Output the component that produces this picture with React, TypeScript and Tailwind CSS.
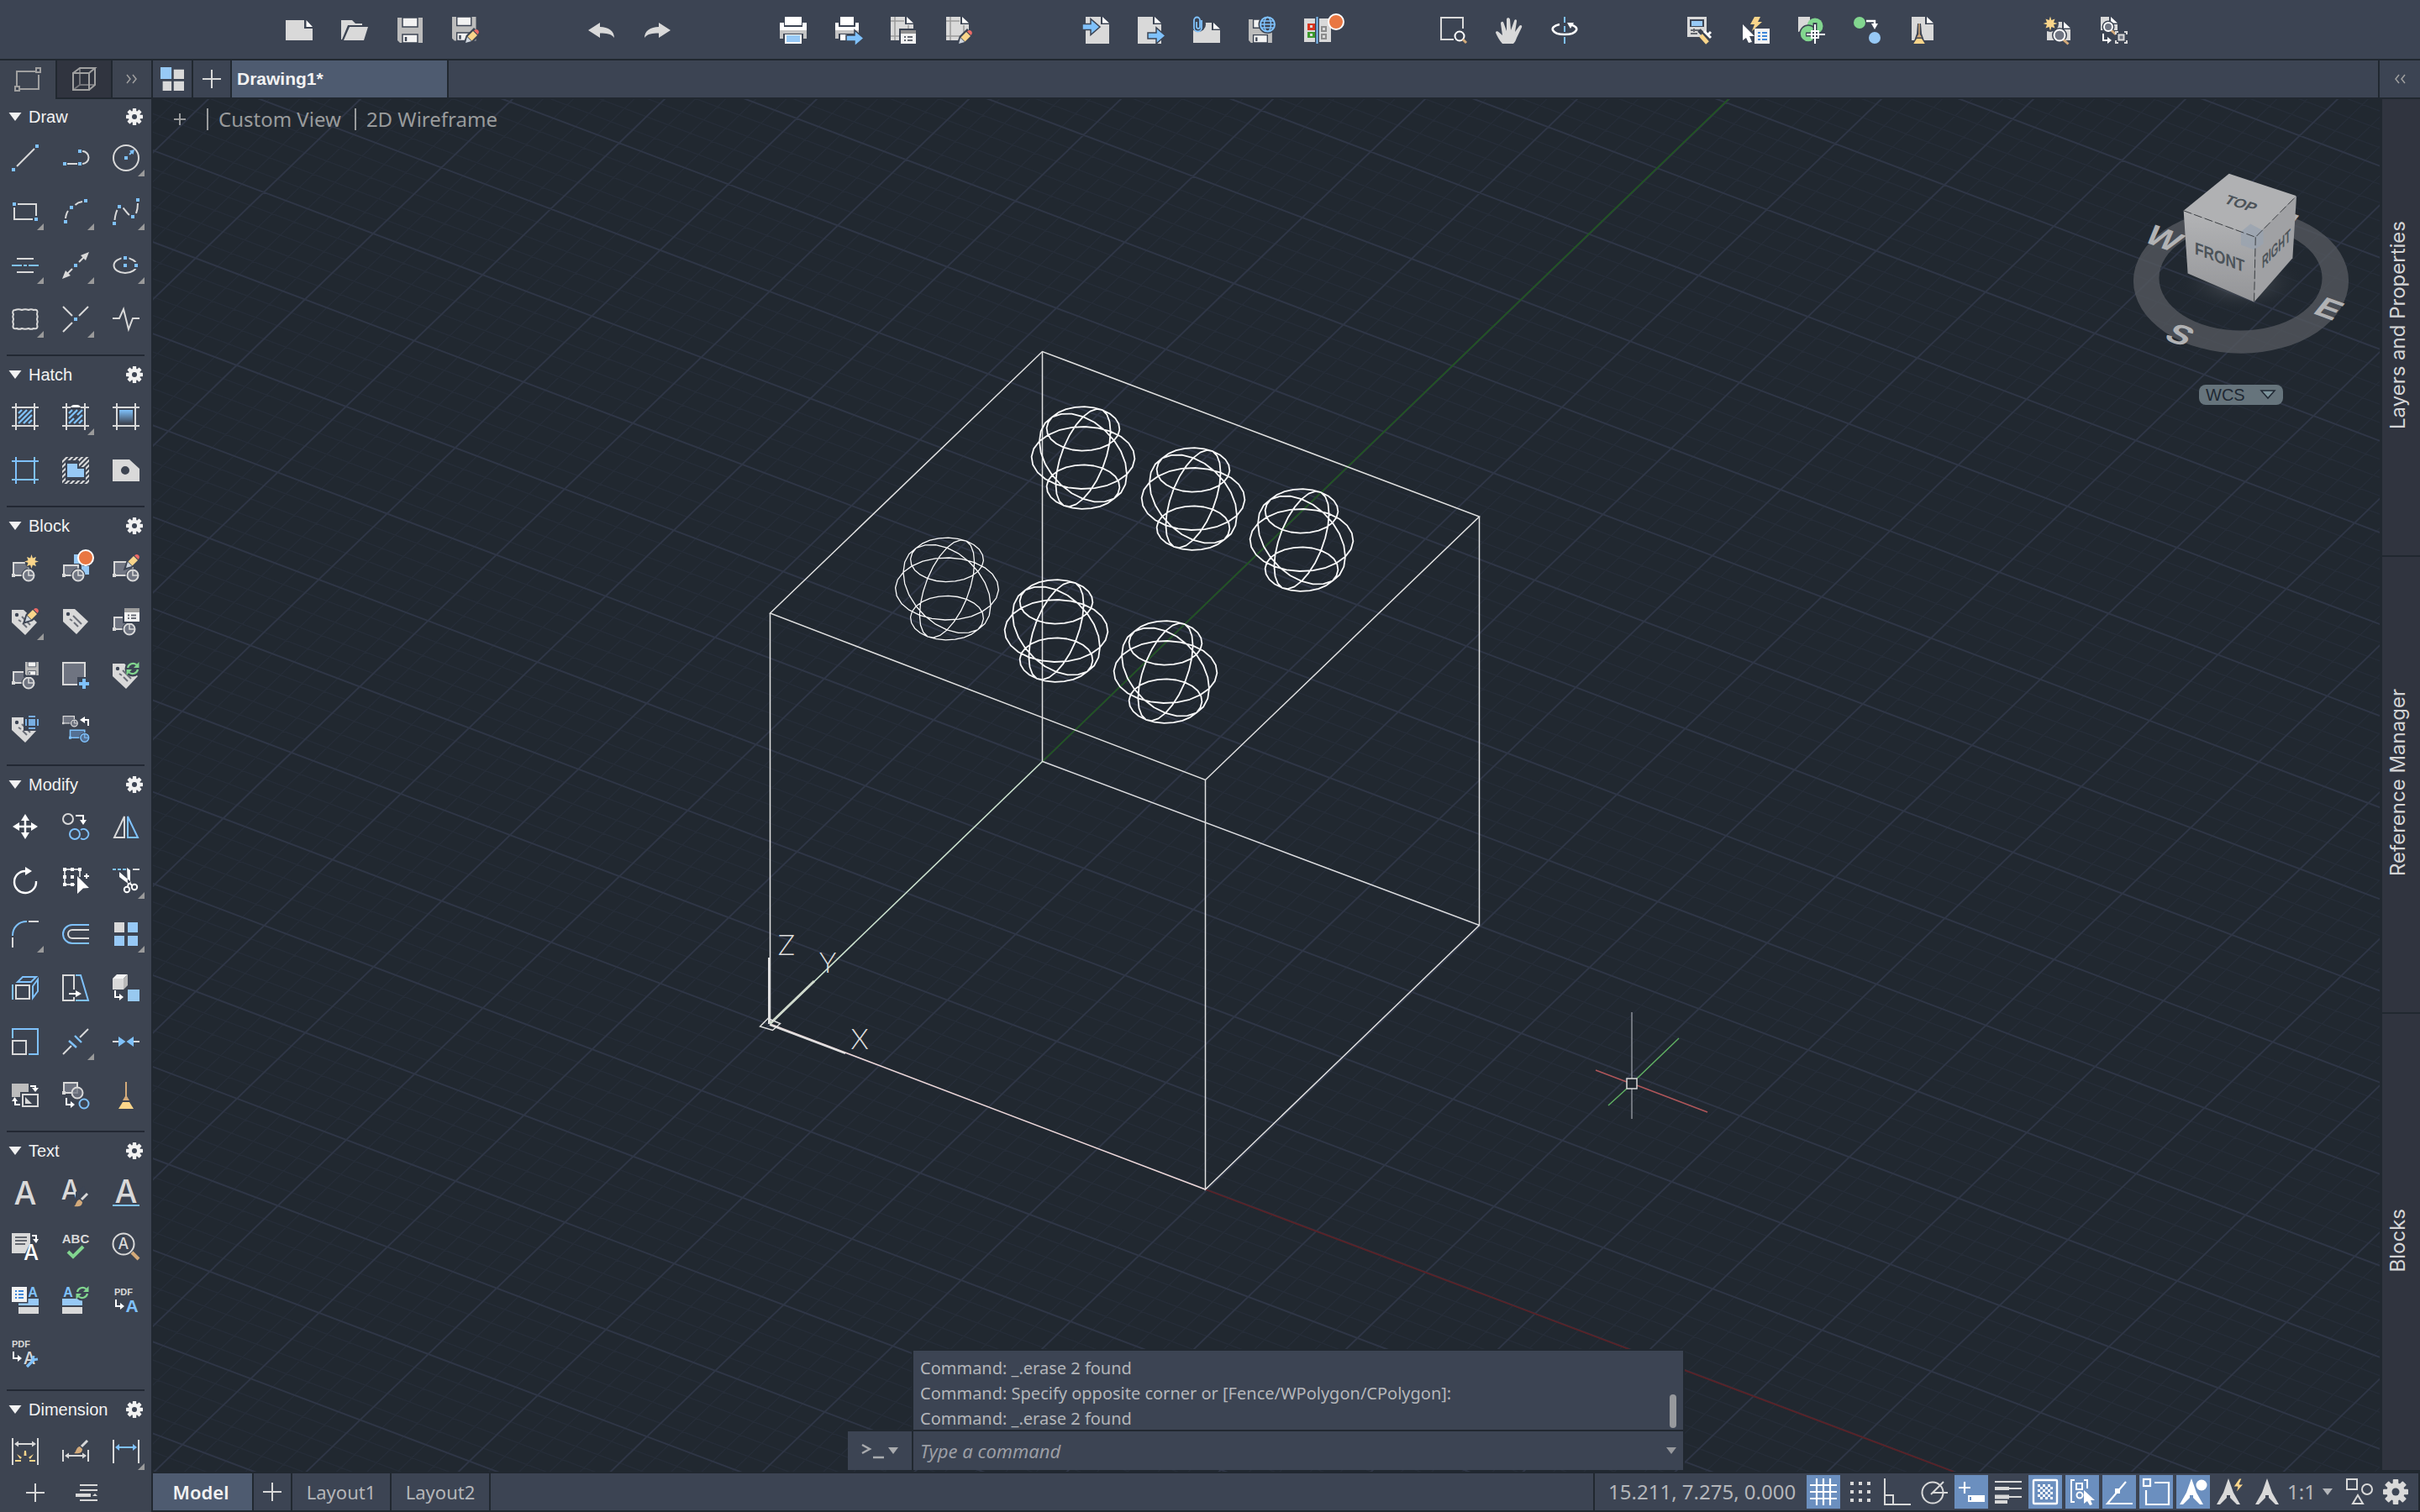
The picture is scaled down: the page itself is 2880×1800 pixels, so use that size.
import React from "react";

const G = "#d9d9d9";
const B = "#7fc1fb";
const LB = "#97c9f6";
const W = "#ffffff";
const Y = "#fad58a";
const BR = "#d3aa7a";
const GR = "#82d68f";
const D = "#3c4453";
const FILL = "#6f7481";

type Kids = { children?: React.ReactNode };

function Svg({ children, className = "size-8" }: Kids & { className?: string }) {
  return (
    <svg viewBox="0 0 32 32" className={`${className} shrink-0 overflow-visible`} fill="none" aria-hidden="true">
      {children}
    </svg>
  );
}

const S = ({ d, c = G, w = 2 }: { d: string; c?: string; w?: number }) => <path d={d} stroke={c} strokeWidth={w} />;
const F = ({ d, c = G }: { d: string; c?: string }) => <path d={d} fill={c} fillRule="evenodd" />;
const Sq = ({ x, y, c = B, s = 4 }: { x: number; y: number; c?: string; s?: number }) => (
  <rect x={x - s / 2} y={y - s / 2} width={s} height={s} fill={c} />
);

/* Shared pieces that several tool icons are made of */
const Frame = ({ c = G }: { c?: string }) => <S c={c} d="M5 0V32M27 0V32M0 5H32M0 27H32" />;

const Pencil = ({ x = 16, y = 0 }: { x?: number; y?: number }) => (
  <g transform={`translate(${x} ${y})`}>
    <path d="M-1 17L2 8L10 0L16 6L8 14Z" fill={D} stroke={D} strokeWidth="3" />
    <path d="M0 16L2 9L7 14Z" fill="#cfd6de" />
    <path d="M2.500 8.500L9 2L14 7L7.500 13.500Z" fill={Y} />
    <path d="M10 1.500Q12.500 -1 15 1Q17 3.500 14.500 6Z" fill="#ec6a66" />
  </g>
);

const BlockShape = ({ x = 0, y = 0, w = 18, h = 15, c = G, f = FILL }: { x?: number; y?: number; w?: number; h?: number; c?: string; f?: string }) => (
  <g transform={`translate(${x} ${y})`}>
    <rect x="2" y={25 - h} width={w} height={h} fill={f} stroke={c} strokeWidth="2" />
    <Sq x={2} y={25} c={c} />
    <circle cx={w + 2} cy="25" r="8.500" fill={D} />
    <circle cx={w + 2} cy="25" r="6.500" fill={f} stroke={c} strokeWidth="2" />
    <path d={`M${w + 2} 19V25H${w + 8}`} stroke={c} strokeWidth="1.500" />
  </g>
);

const Tag = ({ x = 0, y = 0 }: { x?: number; y?: number }) => (
  <g transform={`translate(${x} ${y})`}>
    <path d="M0 0H14L30 15L16 30L0 15Z" fill={G} />
    <circle cx="6" cy="6" r="2.200" fill={D} />
    <path d="M12 8L22 18M8 12L11 14M13 16L18 21" stroke="#6b6f78" strokeWidth="2" />
  </g>
);

const Refresh = ({ x = 16, y = 0 }: { x?: number; y?: number }) => (
  <g transform={`translate(${x} ${y})`}>
    <circle cx="8" cy="8" r="9.500" fill={D} />
    <path d="M2 7A6.500 6.500 0 0 1 12.500 3.500M14 9A6.500 6.500 0 0 1 3.500 12.500" stroke={GR} strokeWidth="2.200" />
    <path d="M15.500 0V7H9ZM0.500 16V9H7Z" fill={GR} />
  </g>
);

const Floppy = ({ k = 1 }: { k?: number }) => (
  <g transform={`scale(${k})`}>
    <path d="M0 0H30V30H3L0 27Z" fill="#bcbcbc" />
    <path d="M6 0H24V11H6Z" fill="#f2f2f2" stroke={D} strokeWidth="1.500" />
    <path d="M6 20H24V30H6Z" fill="#f2f2f2" stroke={D} strokeWidth="1.500" />
    <path d="M10 23V28" stroke={D} strokeWidth="2.500" />
  </g>
);

const Doc = ({ x = 0, y = 0, w = 28, h = 32 }: { x?: number; y?: number; w?: number; h?: number }) => (
  <g transform={`translate(${x} ${y})`}>
    <path d={`M0 0H${w - 10}V9H${w}V${h}H0Z`} fill={G} />
    <path d={`M${w - 8} 0L${w} 7.500H${w - 8}Z`} fill={W} />
  </g>
);

const Badge = ({ x, y }: { x: number; y: number }) => <circle cx={x} cy={y} r="9" fill="#e97742" stroke={W} strokeWidth="2" />;

const RightArrow = ({ x, y, c = B }: { x: number; y: number; c?: string }) => (
  <path transform={`translate(${x} ${y})`} d="M0 -3H10V-9L21 0.500L10 10V4H0Z" fill={c} stroke={D} strokeWidth="1.500" />
);

const Star = ({ x, y }: { x: number; y: number }) => (
  <g transform={`translate(${x} ${y})`} fill={Y}>
    <path d="M0 -8.500L2 -2L8.500 0L2 2L0 8.500L-2 2L-8.500 0L-2 -2Z" />
    <path d="M-5.500 -5.500L0 -3.500L5.500 -5.500L3.500 0L5.500 5.500L0 3.500L-5.500 5.500L-3.500 0Z" />
  </g>
);

const Magnifier = ({ x, y, r = 6 }: { x: number; y: number; r?: number }) => (
  <g transform={`translate(${x} ${y})`}>
    <circle r={r + 2.500} fill={D} />
    <path d={`M${r * 0.7} ${r * 0.8}L${r + 4} ${r + 4}`} stroke={BR} strokeWidth="3" />
    <circle r={r} fill={FILL} stroke={W} strokeWidth="2" />
  </g>
);

const Brush = ({ x, y }: { x: number; y: number }) => (
  <g transform={`translate(${x} ${y})`}>
    <path d="M9 7L16 0" stroke={G} strokeWidth="3" />
    <path d="M0 15C3 14 2 8 7 7L10 10C10 15 5 16 0 15Z" fill={BR} />
  </g>
);

const SmallTurn = ({ x, y }: { x: number; y: number }) => (
  <g transform={`translate(${x} ${y})`}>
    <path d="M1 0V8H7" stroke={W} strokeWidth="2" />
    <path d="M6 4L11 8L6 12Z" fill={W} />
  </g>
);

const Broom = () => (
  <>
    <path d="M15 0H17V17L20 22H12L15 17Z" fill={BR} />
    <path d="M12 24H20L25 32H7Z" fill={Y} />
  </>
);

const T = ({ x, y, s, c = G, b, children }: Kids & { x: number; y: number; s: number; c?: string; b?: boolean }) => (
  <text x={x} y={y} fontSize={s} fill={c} textAnchor="middle" className={b ? "font-['Liberation_Sans'] font-bold" : "font-['Inter'] font-medium"}>
    {children}
  </text>
);

const Gear = ({ className, c = "#f2f2f2" }: { className: string; c?: string }) => (
  <Svg className={className}>
    {[0, 45, 90, 135].map((a) => (
      <rect key={a} x="12.500" y="0" width="7" height="32" rx="1" fill={c} transform={`rotate(${a} 16 16)`} />
    ))}
    <circle cx="16" cy="16" r="11.500" fill={c} />
    <circle cx="16" cy="16" r="4.800" fill={D} />
  </Svg>
);

const Dn = ({ className }: { className: string }) => (
  <svg viewBox="0 0 12 8" className={`${className} shrink-0`} aria-hidden="true">
    <path d="M0 0H12L6 8Z" fill="currentColor" />
  </svg>
);

type Tool = { name: string; icon: React.ReactNode; more?: boolean };

const draw: Tool[] = [
  { name: "Line", icon: <><S d="M6 26L27 5" /><Sq x={2} y={30} /><Sq x={30} y={2} /></> },
  { name: "Polyline", icon: <><S d="M6 23H18M24 8A7.500 7.500 0 0 1 24 23" /><Sq x={3} y={23} /><Sq x={21} y={23} /><Sq x={21} y={8} /></> },
  { name: "Circle", more: true, icon: <><circle cx="16" cy="16" r="15" stroke={G} strokeWidth="2" /><Sq x={16} y={16} /><S c={B} d="M20 12L23 9" /><F c={B} d="M26 6L24.500 12L20 7.500Z" /></> },
  { name: "Rectangle", more: true, icon: <><S d="M7 7H29V21M25 25H3V11" /><Sq x={3} y={7} /><Sq x={29} y={25} /></> },
  { name: "Arc", more: true, icon: <><S d="M4 24C4.500 20 5.500 17 7 15M15.500 8C18 5.500 21 4.500 24 4" /><Sq x={4} y={28} /><Sq x={11} y={11} /><Sq x={28} y={3} /></> },
  { name: "Spline", more: true, icon: <><S d="M2.500 26C3 21 4 17 5.500 14M12.500 11.500C15 14 17 18 20 20M28 18C29.500 14 30 10 30 6" /><Sq x={2} y={30} /><Sq x={8} y={10} /><Sq x={24} y={22} /><Sq x={30} y={2} /></> },
  { name: "Centerline", more: true, icon: <><S d="M6 8H26M6 24H26" /><S c={B} d="M0 16H12M14 16H18M20 16H32" /></> },
  { name: "Ray", more: true, icon: <><S d="M20 12L27 5M12 20L5 27" /><F d="M32 0L22 4L28 10ZM0 32L10 28L4 22Z" /><Sq x={16} y={16} /></> },
  { name: "Ellipse", more: true, icon: <><ellipse cx="15" cy="16" rx="13.500" ry="9" stroke={G} strokeWidth="2" /><Sq x={15} y={7} c={D} s={9} /><Sq x={28} y={16} c={D} s={8} /><Sq x={15} y={7} /><Sq x={15} y={16} /><Sq x={28} y={16} /></> },
  { name: "Revision cloud", more: true, icon: <S d="M4 5C1 5 0.500 8 2 10Q0.500 13 2 16Q0.500 19 2 22C0.500 26 2 28 6 27Q9 28.500 12 27Q16 28.500 20 27Q23 28.500 26 27C30 28 31.500 26 30 22Q31.500 19 30 16Q31.500 13 30 10C31.500 6 30 4 26 5Q23 3.500 20 5Q16 3.500 12 5Q8 3.500 4 5Z" /> },
  { name: "Point", more: true, icon: <><S d="M1 1L12 12M31 1L20 12M1 31L12 20" /><Sq x={16} y={16} /></> },
  { name: "Breakline", icon: <S d="M0 15H8L13 4L19 28L24 15H32" /> },
];

const hatch: Tool[] = [
  { name: "Hatch", icon: <><Frame /><path d="M8 12L12 8M8 18L18 8M8 24L24 8M14 24L24 14M20 24L24 20" stroke={B} strokeWidth="2.400" /></> },
  { name: "Hatch edit", more: true, icon: <><S d="M5 0V32M27 0V32M0 5H10M22 5H32M0 27H32" /><F c={W} d="M10 5Q11 2 14 2H18Q21 2 22 5Z" /><path d="M8 12L12 8M8 18L18 8M8 24L14 18M18 14L24 8M14 24L24 14M20 24L24 20" stroke={B} strokeWidth="2.400" /></> },
  { name: "Gradient", icon: <><defs><linearGradient id="gradTool" x1="0" y1="0" x2="0" y2="1"><stop offset="0" stopColor="#7fc1fb" /><stop offset="1" stopColor="#3f4756" /></linearGradient></defs><Frame /><rect x="8" y="8" width="16" height="16" fill="url(#gradTool)" /></> },
  { name: "Boundary", icon: <Frame c={B} /> },
  { name: "Wipeout", icon: <><defs><clipPath id="wipeClip"><path d="M0 0H32V32H0Z" /></clipPath></defs><g clipPath="url(#wipeClip)"><path d="M-2 8L8 -2M-2 14L14 -2M-2 20L20 -2M-2 26L26 -2M-2 32L32 -2M0 36L36 0M6 36L36 6M12 36L36 12M18 36L36 18M24 36L36 24" stroke={G} strokeWidth="2.200" /></g><F c={D} d="M4 4H20V12H28V28H4Z" /><F c={LB} d="M6 8H18V14H26V24H6Z" /></> },
  { name: "Region", icon: <F d="M0 3H20L32 14V29H0ZM20 16A5 5 0 1 0 10 16A5 5 0 1 0 20 16Z" /> },
];

const block: Tool[] = [
  { name: "Create block", icon: <><BlockShape /><circle cx="23.500" cy="8.500" r="8" fill={D} /><Star x={23.500} y={8.500} /></> },
  { name: "Insert block", icon: <><F c={LB} d="M14 0H24V14H32V24H14Z" /><path d="M0 11H23V27H0Z" fill={D} /><BlockShape w={17} h={12} /><Badge x={28} y={4} /></> },
  { name: "Edit block", icon: <><BlockShape w={22} h={16} /><Pencil /></> },
  { name: "Edit attributes", more: true, icon: <><Tag y={2} /><Pencil /></> },
  { name: "Define attribute", icon: <Tag x={1} y={1} /> },
  { name: "Block attribute manager", icon: <><BlockShape w={18} h={14} /><path d="M12 -1H33V18H12Z" fill={D} /><F c="#f2f2f2" d="M14 0H32V16H14Z" /><F c="#9d9d9d" d="M14 0H32V5H14Z" /><S c="#6b6f78" d="M18 8.500H20M22 8.500H28M18 12H20M22 12H28" /></> },
  { name: "Save block", icon: <><BlockShape w={18} h={13} /><g transform="translate(16 0)"><path d="M-2 -1H17V18H-2Z" fill={D} /><Floppy k={0.53} /></g></> },
  { name: "Base point", icon: <><rect x="1" y="1" width="26" height="26" fill={FILL} stroke={G} strokeWidth="2" /><path d="M18 18H34V34H18Z" fill={D} /><S c={B} w={4} d="M26 20V32M20 26H32" /></> },
  { name: "Synchronize attributes", icon: <><Tag y={2} /><Refresh /></> },
  { name: "Attribute display", icon: <><Tag y={2} /><path d="M14 -1H33V18H14Z" fill={D} /><F c="#78aee2" d="M20 4H28V12H20ZM20 0H28V2H20ZM20 14H28V16H20ZM16 4H18V12H16ZM30 4H32V12H30Z" /></> },
  { name: "Replace block", icon: <><g transform="scale(.6) translate(0 -10)"><BlockShape w={22} h={14} /></g><S c={W} d="M31 12V5H25" /><F c={W} d="M27 1L21 5L27 9Z" /><g transform="translate(8 12) scale(.75)"><BlockShape x={0} y={-6} w={23} h={12} c={B} f="#557093" /></g></> },
];

const modify: Tool[] = [
  { name: "Move", icon: <><S c={W} w={2.5} d="M16 6V26M6 16H26" /><F c={W} d="M16 1L21 9H11ZM16 31L21 23H11ZM1 16L9 11V21ZM31 16L23 11V21Z" /></> },
  { name: "Copy", icon: <><circle cx="7" cy="7" r="6" stroke={G} strokeWidth="2" /><S c={W} d="M16 3H25V9" /><F c={W} d="M21 8H29L25 14Z" /><circle cx="15" cy="25" r="6" stroke={B} strokeWidth="2" /><S c={B} d="M22 20A6 6 0 1 1 22 30" /></> },
  { name: "Mirror", icon: <><S d="M14 4V29H2Z" /><S c={B} d="M18 4V29H30Z" /></> },
  { name: "Rotate", icon: <><S c={W} w={2.4} d="M29 17A13 13 0 1 1 16 5" /><F c={W} d="M16 0L24 5L16 10Z" /></> },
  { name: "Scale selection", icon: <><S c={W} w={1.5} d="M3 3H21V12M3 3V21H15" /><Sq c={W} x={3} y={3} /><Sq c={W} x={12} y={3} /><Sq c={W} x={21} y={3} /><Sq c={W} x={3} y={12} /><Sq c={W} x={12} y={12} /><Sq c={W} x={3} y={21} /><Sq c={W} x={12} y={21} /><F c={W} d="M18 11L32 25L25 25.500L18 32Z" /><S c={W} d="M29 8V14M26 11H32" /></> },
  { name: "Trim", more: true, icon: <><S c={B} d="M0 3H4M6 3H10M12 3H16" /><S d="M24 3H32" /><F c={W} d="M17 1L21 4V20H18ZM8 6L22 18L20 21L8 12Z" /><circle cx="17" cy="27" r="3.200" stroke={W} strokeWidth="2" /><circle cx="26" cy="24" r="3.200" stroke={W} strokeWidth="2" /><S c={W} d="M19 19L18 24M20 19L23 22" /></> },
  { name: "Fillet", more: true, icon: <><S c={B} d="M1 18C1 8 8 1 18 1" /><S d="M20 1H32M1 20V32" /></> },
  { name: "Offset", icon: <><S c={B} d="M32 5H12A11 11 0 0 0 12 27H32" /><S d="M32 11H12A5 5 0 0 0 12 21H32" /></> },
  { name: "Array", more: true, icon: <><F d="M2 2H14V14H2Z" /><F c={LB} d="M18 2H30V14H18ZM2 18H14V30H2ZM18 18H30V30H18Z" /></> },
  { name: "3D faces", icon: <><rect x="5" y="13" width="16" height="16" stroke={G} strokeWidth="2" /><S c={B} d="M1 12V30M7 9L13 3H29L23 9ZM25 14L31 6V20L25 28Z" /></> },
  { name: "Stretch", icon: <><S d="M14 18V1H1V31H14V27" /><S c={B} d="M16 1H22L31 31H16" /><S c={W} d="M8 23H18" /><F c={W} d="M16 19L23 23L16 27Z" /></> },
  { name: "Flatten solid", icon: <><F c="#d9d9d9" d="M0 5H13V18H0Z" /><F c="#f4f4f4" d="M0 5L5 0H18L13 5Z" /><F c="#b9b9b9" d="M13 5L18 0V13L13 18Z" /><F c="#98c9f0" d="M18 18H32V32H18Z" /><SmallTurn x={2} y={19} /></> },
  { name: "Scale", icon: <><rect x="1" y="15" width="16" height="16" stroke={G} strokeWidth="2" /><S c={B} d="M1 12V1H31V31H20" /></> },
  { name: "Break", more: true, icon: <><S d="M1 31L11 21M21 11L31 1" /><S c={B} w={2.4} d="M8 15L17 23M15 9L23 17" /></> },
  { name: "Join", icon: <><S d="M0 16H8M24 16H32" /><F c={B} d="M7 10L15.500 16L7 22ZM25 10L16.500 16L25 22Z" /></> },
  { name: "Draw order", icon: <><F c="#bdbdbd" d="M0 2H20V12H10V18H0Z" /><S d="M13 15H31V29H13Z" /><F d="M16 18L24 26H16Z" /><S c={W} d="M22 5H28V8M4 22V27H10" /><F c={W} d="M24 7H32L28 12ZM0 23H7L3.500 18Z" /></> },
  { name: "Change space", icon: <><rect x="2" y="1" width="16" height="12" fill={FILL} stroke={G} strokeWidth="2" /><Sq c={G} x={2} y={13} /><circle cx="18" cy="13" r="6.500" fill={FILL} stroke={G} strokeWidth="2" fillOpacity=".8" /><SmallTurn x={4} y={19} /><circle cx="26" cy="26" r="5.500" stroke={B} strokeWidth="2" /></> },
  { name: "Purge", icon: <Broom /> },
];

const textTools: Tool[] = [
  { name: "Text", icon: <T x={16} y={30} s={38}>A</T> },
  { name: "Text style", icon: <><T x={10} y={24} s={32}>A</T><path d="M16 15L26 8L30 22L16 31Z" fill={D} /><Brush x={14} y={17} /></> },
  { name: "Single line text", icon: <><T x={16} y={28} s={38}>A</T><S c={B} d="M0 31H32" /></> },
  { name: "Convert to text", icon: <><F d="M0 0H22V12L16 24H0Z" /><S c="#63676f" d="M4 5H18M4 9H18M4 13H16" /><T x={23} y={32} s={25} c={W}>A</T><S c={W} d="M24 3H29V8" /><F c={W} d="M25 7H32L29 12Z" /></> },
  { name: "Spelling", icon: <><T x={16} y={12} s={15} b>ABC</T><S c={GR} w={4} d="M7 22L13 28L25 16" /></> },
  { name: "Find text", icon: <><circle cx="13" cy="13" r="12.500" stroke={G} strokeWidth="2" /><T x={13} y={19} s={18}>A</T><S c={BR} w={4} d="M23 23L31 31" /></> },
  { name: "Field", icon: <><F c={LB} d="M8 14H32V22H8Z" /><F d="M8 24H32V32H8Z" /><T x={25} y={12} s={16} c={B} b>A</T><path d="M-1 -1H19.500V19.500H-1Z" fill={D} /><F c="#f2f2f2" d="M0 0H18V18H0Z" /><S c="#3f86d8" d="M4 5H6M8 5H14M4 9H6M8 9H14M4 13H6M8 13H14" /></> },
  { name: "Update field", icon: <><F c={LB} d="M0 14H24V22H0Z" /><F d="M0 24H24V32H0Z" /><T x={7} y={12} s={16} c={B} b>A</T><Refresh x={16} y={-1} /></> },
  { name: "PDF to text", icon: <><T x={13} y={10} s={11} b>PDF</T><SmallTurn x={3} y={15} /><T x={23} y={30} s={21} c={B} b>A</T></> },
  { name: "PDF text settings", icon: <><T x={11} y={8} s={11} b>PDF</T><SmallTurn x={1} y={13} /><T x={21} y={28} s={20}>A</T><S c={B} w={3.4} d="M18 31L27 22" /><path d="M26 18L25 23L31 22" stroke={B} strokeWidth="3" /></> },
];

const dimension: Tool[] = [
  { name: "Quick dimension", icon: <><S d="M1 0V32M31 0V32M5 7H27" /><F d="M3 7L8 3.500V10.500ZM29 7L24 3.500V10.500Z" /><F c={Y} d="M15 15H17L17.500 21H14.500ZM6 19L12 23L10 25ZM26 19L20 23L22 25ZM4 26L11 26V28H4ZM28 26L21 26V28H28Z" /></> },
  { name: "Dimension style", icon: <><S d="M1 14V28M31 14V28M5 21H27" /><F d="M3 21L8 17.500V24.500ZM29 21L24 17.500V24.500Z" /><path d="M13 16L28 2L30 8L20 19Z" fill={D} /><Brush x={14} y={3} /></> },
  { name: "Linear dimension", more: true, icon: <><S d="M1 2V30M31 2V30" /><S c={B} d="M5 11H27" /><F c={B} d="M3 11L8 7V15ZM29 11L24 7V15Z" /></> },
];

const sections: { title: string; tools: Tool[] }[] = [
  { title: "Draw", tools: draw },
  { title: "Hatch", tools: hatch },
  { title: "Block", tools: block },
  { title: "Modify", tools: modify },
  { title: "Text", tools: textTools },
  { title: "Dimension", tools: dimension },
];

const PlotSheet = () => (
  <>
    <Doc w={27} h={28} />
    <S c="#9b9b9b" w={1.5} d="M0 5H16M5 0V28M0 23H20M21 10V20" />
  </>
);

const toolbar: Tool[][] = [
  [
    { name: "New", icon: <><F d="M0 4H22V14H32V28H0Z" /><F c={W} d="M24.500 4L32 12H24.500Z" /></> },
    { name: "Open", icon: <><F d="M0 4H13L17 8H25V10H8L1 27H0Z" /><F d="M10 12H32L27 28H3Z" /></> },
    { name: "Save", icon: <g transform="translate(1 1)"><Floppy /></g> },
    { name: "Save as", icon: <><Floppy k={0.95} /><Pencil x={16} y={15} /></> },
  ],
  [
    { name: "Undo", icon: <F d="M0 16L14 7V12C24 12 31 17 31 25C27 20 22 19.500 14 19.500V25Z" /> },
    { name: "Redo", icon: <F d="M32 16L18 7V12C8 12 1 17 1 25C5 20 10 19.500 18 19.500V25Z" /> },
  ],
  [
    { name: "Print", icon: <><F c={W} d="M0 7H5V12H27V7H32V16H0Z" /><F c={W} d="M6 0H26V10H6Z" /><F c="#c4c4c4" d="M0 16H32V26H28V20H4V26H0Z" /><F c={W} d="M6 21H26V32H6Z" /><F c={LB} d="M8 22H24V30H8Z" /></> },
    { name: "Batch plot", icon: <><F c={W} d="M0 7H4V12H24V7H28V16H0Z" /><F c={W} d="M6 0H22V10H6Z" /><F c="#c4c4c4" d="M0 16H28V26H24V20H4V26H0Z" /><F c={W} d="M6 21H14V28H6Z" /><RightArrow x={13} y={25} /></> },
    { name: "Page setup", icon: <><PlotSheet /><path d="M10 14H32V32H10Z" fill={D} /><F c="#f2f2f2" d="M12 16H30V32H12Z" /><F c="#8f8f8f" d="M12 16H30V20H12Z" /><S c="#63676f" d="M16 24H18M20 24H26M16 28H18M20 28H26" /></> },
    { name: "Plot style", icon: <><PlotSheet /><Pencil x={15} y={16} /></> },
  ],
  [
    { name: "Import", icon: <><Doc x={4} /><RightArrow x={0} y={11.500} /></> },
    { name: "Export", icon: <><Doc x={0} /><RightArrow x={12} y={22} /></> },
    { name: "Attach", icon: <><Doc x={0} y={7} w={32} h={24} /><circle cx="6" cy="9" r="9" fill={D} /><S c={B} w={1.8} d="M10 4V13A4.500 4.500 0 0 1 1 13V4A3.500 3.500 0 0 1 8 4V12A2 2 0 0 1 4 12V6" /></> },
    { name: "Save to web", icon: <><g transform="translate(0 3)"><Floppy k={0.93} /></g><circle cx="22.500" cy="9" r="11" fill={D} /><circle cx="22.500" cy="9" r="8.500" stroke={B} strokeWidth="2" /><ellipse cx="22.500" cy="9" rx="4" ry="8.500" stroke={B} strokeWidth="1.500" /><S c={B} w={1.5} d="M14 9H31M15.500 5H29.500M15.500 13H29.500" /></> },
    { name: "Compare", icon: <><F d="M0 2H13V30H0ZM18 2H32V30H18Z" /><F c="#d9341f" d="M4 8H13V16H4Z" /><F c="#3c9a2c" d="M4 18H13V25H4Z" /><F d="M7 10H10V13H7ZM7 20H10V23H7Z" /><S c="#8c8c8c" d="M21 12H26V17H21ZM21 21H26V26H21Z" /><S c={B} d="M15.500 0V32" /><Badge x={38} y={6} /></> },
  ],
  [
    { name: "Zoom window", icon: <><S d="M27 14V1H1V27H16" /><circle cx="23" cy="23" r="5.500" stroke={W} strokeWidth="2" /><S c={BR} w={3} d="M27 27L31 31" /></> },
    { name: "Pan", icon: <path d="M8 32C4 28 2 23 0 19C0 17 2 16.500 4 18.500L8 22L6 8C6 5.500 9 5 9.500 7.500L13 17L13 3C13 0.500 16.500 0.500 17 3L18 16L22 5C22.500 2.500 25.500 3 25 5.500L23 18L28 11C29.500 9 32 10 31 12.500L25 25C24 28 23 30 21 32Z" fill={G} /> },
    { name: "Orbit", icon: <><S c={B} w={2} d="M16 0V7M16 11V18M16 24V32" /><S c={W} w={2.6} d="M10 9C-4 12 1 21 16 21C31 21 36 12 22 9" /><F c={W} d="M27 7L19 7L23 14Z" /></> },
  ],
  [
    { name: "Quick calc", icon: <><F d="M0 0H23V24H0Z" /><F c={D} d="M3 3H20V12H3Z" /><F c={LB} d="M5 5H18V11H5Z" /><S c="#63676f" w={2} d="M4 16H16M4 20H12M8 14V18" /><path d="M14 16L22 24L18 31" stroke={D} strokeWidth="5" /><S c={Y} w={5} d="M16 22L24 31" /><S c={W} w={3} d="M20 17L28 25M28 18L24 22" /></> },
    { name: "Quick select", icon: <><F c={Y} d="M14 0H21L18 6H23L11 17L14 9H9Z" /><F c={W} d="M0 9L14 23H8L11 30L7 31L4 25L0 28Z" /><F c="#f2f2f2" d="M14 14H32V32H14Z" /><S c="#3f86d8" d="M18 19H21M23 19H29M18 23H21M23 23H29M18 27H21M23 27H29" /></> },
    { name: "Match layers", icon: <><F d="M0 0H14V14L0 18Z" /><circle cx="20" cy="11" r="9.500" fill={GR} /><circle cx="12" cy="20" r="10" fill={GR} stroke={D} strokeWidth="1.500" /><path d="M20 7V32M9 21H32" stroke={D} strokeWidth="5" /><S c={W} d="M20 9V32M10 21H32" /><rect x="16" y="17" width="8" height="8" stroke={W} strokeWidth="2" /></> },
    { name: "Match properties", icon: <><circle cx="7" cy="7" r="7" fill={GR} /><circle cx="25" cy="25" r="7" fill={LB} /><S c={W} w={2.4} d="M15 5H25V10" /><F c={W} d="M21 8H29L25 15Z" /></> },
    { name: "Purge drawing", icon: <><Doc x={3} w={26} h={28} /><path d="M4 34L9 20L10 8H14L15 20L20 34Z" fill={D} /><g transform="translate(0 8) scale(.75)"><Broom /></g></> },
  ],
  [
    { name: "Find object", icon: <><Doc x={2} y={6} w={28} h={22} /><circle cx="6" cy="8" r="10" fill={D} /><Star x={6} y={8} /><Magnifier x={17} y={22} r={6.5} /></> },
    { name: "Find and zoom", icon: <><Doc w={20} h={16} /><Magnifier x={9} y={12} r={5} /><SmallTurn x={2} y={20} /><S d="M18 21V18H21M28 18H31V21M31 28V31H28M21 31H18V28" /><rect x="21.500" y="21.500" width="6" height="6" fill={FILL} stroke={G} strokeWidth="2" /></> },
  ],
];

function Header() {
  return (
    <header className="flex h-18 shrink-0 items-center justify-center gap-32.5 border-b-2 border-[#212830] bg-[#3c4453] pt-0.5 pr-2">
      {toolbar.map((group, i) => (
        <div key={i} className="flex gap-8.5">
          {group.map((t) => (
            <button key={t.name} aria-label={t.name}>
              <Svg>{t.icon}</Svg>
            </button>
          ))}
        </div>
      ))}
    </header>
  );
}

function Palette() {
  return (
    <aside className="flex w-45 shrink-0 flex-col bg-[#3d4451]">
      <div className="flex h-11.5 shrink-0">
        <button aria-label="Drafting" className="flex w-16.5 items-center justify-center">
          <Svg>
            <g stroke="#a0a0a0" strokeWidth="2">
              <path d="M25 6H3V23M7 27H29V10" />
              <rect x="26" y="2" width="5" height="5" />
              <rect x="1" y="24" width="5" height="5" />
            </g>
          </Svg>
        </button>
        <button aria-label="Modeling" className="flex flex-1 items-center justify-center border-x-2 border-b-2 border-[#212830] bg-[#30343f]">
          <Svg>
            <g stroke="#a0a0a0" strokeWidth="2">
              <path d="M3 9H22V29H3ZM3 9L11 3H29L22 9M29 3V23L22 29" />
              <path d="M11 3V23H29M11 23L3 29" strokeOpacity=".6" />
            </g>
          </Svg>
        </button>
        <button aria-label="More palettes" className="flex w-11.5 items-center justify-center border-b-2 border-[#212830]">
          <svg viewBox="0 0 14 12" className="h-3 w-3.5" fill="none" stroke="#a0a0a0" strokeWidth="1.500" aria-hidden="true">
            <path d="M1 1L5 6L1 11M8 1L12 6L8 11" />
          </svg>
        </button>
      </div>
      <div className="min-h-0 flex-1 overflow-hidden">
        {sections.map((s, i) => (
          <section key={s.title}>
            {i > 0 && <hr className="mx-2 border-t-2 border-[#222833]" />}
            <div className={`flex items-center pt-1 pr-2.5 pl-2.5 ${i > 0 ? "h-10" : "h-9.5"}`}>
              <button className="flex flex-1 items-center gap-2 text-[#f2f2f2]">
                <Dn className="h-2.5 w-4" />
                <h2 className="font-['Liberation_Sans'] text-xl leading-7">{s.title}</h2>
              </button>
              <button aria-label={`${s.title} settings`}>
                <Gear className="size-5" />
              </button>
            </div>
            <div className="grid grid-cols-3 pb-2.5">
              {s.tools.map((t) => (
                <button key={t.name} aria-label={t.name} className="relative flex h-16 items-center justify-center">
                  <Svg>{t.icon}</Svg>
                  {t.more && (
                    <svg viewBox="0 0 8 8" className="absolute right-2 bottom-2.5 size-2" aria-hidden="true">
                      <path d="M8 0V8H0Z" fill="#9a9a9a" />
                    </svg>
                  )}
                </button>
              ))}
            </div>
          </section>
        ))}
      </div>
      <div className="flex h-11.5 shrink-0 items-center gap-9 pl-7.5">
        <button aria-label="Add panel">
          <svg viewBox="0 0 24 24" className="size-6" stroke={G} strokeWidth="2" aria-hidden="true">
            <path d="M12 1V23M1 12H23" />
          </svg>
        </button>
        <button aria-label="Panel list">
          <svg viewBox="0 0 26 22" className="h-5.5 w-6.5" stroke={G} strokeWidth="2" aria-hidden="true">
            <path d="M5 2H26M5 8H26M5 20H26" />
            <path d="M0 14H18" strokeWidth="4" />
            <path d="M20 15L23 12L26 15Z" fill={G} stroke="none" />
          </svg>
        </button>
      </div>
    </aside>
  );
}

/* Ground grid: one family of lines runs along X, the other along Y */
const xSlope = 0.3775;
const ySlope = 0.965;
const xLines = Array.from({ length: 156 }, (_, i) => i - 60);
const yLines = Array.from({ length: 156 }, (_, i) => i - 75);

function gridPath(major: boolean) {
  const out: string[] = [];
  for (const k of xLines) {
    if ((k % 5 === 0) !== major) continue;
    const y = (x: number) => 1220 + xSlope * (x - 916.5) - 21.82 * k;
    out.push(`M180 ${y(180).toFixed(1)}L2840 ${y(2840).toFixed(1)}`);
  }
  for (const k of yLines) {
    if ((k % 5 === 0) !== major) continue;
    const x = (y: number) => 916 - (y - 1220) / ySlope + 36.2 * k;
    out.push(`M${x(1760).toFixed(1)} 1760L${x(100).toFixed(1)} 100`);
  }
  return out.join("");
}

/* Wireframe sphere: two meridian circles, the equator and the 45 degree parallels */
const R = 61.4;
const axisX = [0.8473, 0.3206];
const axisY = [0.531, -0.5115];
const axisZ = [0, -0.797];

function ring(u: number[], v: number[], r: number, lift: number) {
  const pts: string[] = [];
  for (let i = 0; i < 24; i++) {
    const a = (i / 24) * Math.PI * 2;
    const px = r * (Math.cos(a) * u[0] + Math.sin(a) * v[0]) + lift * axisZ[0];
    const py = r * (Math.cos(a) * u[1] + Math.sin(a) * v[1]) + lift * axisZ[1];
    pts.push(`${px.toFixed(1)} ${py.toFixed(1)}`);
  }
  return `M${pts.join("L")}Z`;
}

const q = R * Math.SQRT1_2;
const spherePath = [
  ring(axisX, axisZ, R, 0),
  ring(axisY, axisZ, R, 0),
  ring(axisX, axisY, R, 0),
  ring(axisX, axisY, q, q),
  ring(axisX, axisY, q, -q),
].join("");

const spheres = [
  { x: 1289, y: 545, w: 1.8 },
  { x: 1420, y: 594, w: 1.8 },
  { x: 1549, y: 643, w: 1.8 },
  { x: 1127, y: 701, w: 1.3 },
  { x: 1257, y: 751, w: 1.8 },
  { x: 1387, y: 800, w: 1.8 },
];

function Scene() {
  return (
    <svg viewBox="182 118 2650 1634" preserveAspectRatio="xMidYMid slice" className="absolute inset-0 size-full" fill="none" role="img" aria-label="Wireframe box with six spheres">
      <path d={gridPath(false)} stroke="#262d38" strokeWidth="1.500" />
      <path d={gridPath(true)} stroke="#2f3646" strokeWidth="2" />
      <path d="M1240.500 906.700L2057 118" stroke="#225523" strokeWidth="1.800" />
      <path d="M1434.500 1416L2325 1752" stroke="#5a2227" strokeWidth="1.800" />
      <g stroke="#e0e0e0" strokeWidth="1.500">
        <path d="M916.500 730L1240.500 418.500L1760.500 615L1434.500 928.500Z" />
        <path d="M1240.500 418.500V906.500L1760.500 1101.500V615M1760.500 1101.500L1434.500 1416V928.500M916.500 730V1219" />
        <path d="M916.500 1219L1434.500 1416" stroke="#f0dada" />
        <path d="M916.500 1219L1240.500 906.500" stroke="#cfe6cf" />
      </g>
      {spheres.map((s) => (
        <path key={`${s.x}`} d={spherePath} transform={`translate(${s.x} ${s.y})`} stroke="#fafafa" strokeWidth={s.w} strokeLinejoin="round" />
      ))}
      <g stroke="#e0e0e0">
        <path d="M915 1140V1219" strokeWidth="2" />
        <path d="M916 1220L1006 1254" strokeWidth="2" />
        <path d="M916 1219L969 1168" strokeWidth="3" stroke="#d0dacc" />
        <path d="M904.500 1222L914 1212.500L928.500 1218.500L919.500 1226.500Z" strokeWidth="1.500" />
      </g>
      <g fill="#dcdcdc" fontSize="34" textAnchor="middle" className="font-['Lato'] font-light">
        <text x="936" y="1137">Z</text>
        <text x="985" y="1158">Y</text>
        <text x="1023" y="1249">X</text>
      </g>
      <g strokeWidth="1.500">
        <path d="M1942 1205V1284M1942 1296V1332" stroke="#8a8f96" />
        <path d="M1998 1236L1948 1284M1936 1296L1914 1316" stroke="#5fae62" />
        <path d="M1899 1274L1936 1288M1948 1292L2032 1324" stroke="#b0565a" />
        <rect x="1936" y="1284" width="12" height="12" stroke="#d9d9d9" />
      </g>
    </svg>
  );
}

function ViewCube() {
  return (
    <svg viewBox="234 138 774 651" className="h-54 w-64.5 overflow-visible" role="img" aria-label="View cube">
      <defs>
        <linearGradient id="cubeFront" x1="0" y1="0" x2="0" y2="1">
          <stop offset="0" stopColor="#b3b4b6" />
          <stop offset="1" stopColor="#949598" />
        </linearGradient>
        <radialGradient id="cubeGlow">
          <stop offset="0" stopColor="#5a5f66" stopOpacity=".9" />
          <stop offset="1" stopColor="#212830" stopOpacity="0" />
        </radialGradient>
      </defs>
      <path
        d="M235 525A386 260 0 1 0 1007 525A386 260 0 1 0 235 525ZM327 515A292 188 0 1 1 912 515A292 188 0 1 1 327 515Z"
        fill="#54585f"
        fillOpacity=".78"
        fillRule="evenodd"
      />
      <ellipse cx="620" cy="530" rx="230" ry="110" fill="url(#cubeGlow)" />
      <g fill="#b1b2b4" fontSize="138" className="font-['Liberation_Sans'] font-bold">
        <text transform="matrix(.85 .31 -.5 .62 266 382)">W</text>
        <text transform="matrix(.85 .31 -.5 .62 340 733)">S</text>
        <text transform="matrix(.85 .31 -.5 .62 874 640)">E</text>
        <text transform="matrix(.85 .31 -.5 .62 705 322)">N</text>
      </g>
      <path d="M578 140L820 220L673 368L415 273Z" fill="#b0b1b3" />
      <path d="M415 273L673 368L668 601L430 498Z" fill="url(#cubeFront)" />
      <path d="M673 368L820 220L806 443L668 601Z" fill="#a0a1a4" />
      <path d="M655 320L701 345V392L668 413L621 396V348Z" fill="#98a3b0" fillOpacity=".75" />
      <path d="M415 273L673 368L820 220M673 368L668 601" stroke="#3c3f44" strokeWidth="3" strokeDasharray="30 10" fill="none" />
      <g fill="#4c5359" fontSize="62" className="font-['Liberation_Sans'] font-bold">
        <text transform="matrix(.84 .31 0 1 455 428)">FRONT</text>
        <text transform="matrix(.53 -.54 0 1 696 482)">RIGHT</text>
        <text transform="matrix(.85 .28 -.5 .66 556 244)">TOP</text>
      </g>
    </svg>
  );
}

function CommandLine() {
  return (
    <div className="absolute bottom-0.5 left-1/2 w-249 max-w-full -translate-x-1/2 font-['Noto_Sans'] text-xl">
      <div className="ml-19 border-2 border-b-0 border-[#212830] bg-[#3c4453]">
        <div className="flex h-23.5 justify-between pt-1.5 pl-2">
          <div className="text-xl leading-7.5 text-[#b4b6ba]">
            <p>Command: _.erase 2 found</p>
            <p>Command: Specify opposite corner or [Fence/WPolygon/CPolygon]:</p>
            <p>Command: _.erase 2 found</p>
          </div>
          <div className="mr-2 mb-0.5 h-10 w-2 self-end rounded-full bg-[#97999d]" />
        </div>
      </div>
      <form className="flex h-12 gap-0.5 bg-[#212830] pt-0.5 pr-0.5">
        <button type="button" aria-label="Recent commands" className="flex w-19 items-center justify-center gap-1 bg-[#3c4453] text-[#a9abae]">
          <svg viewBox="0 0 28 20" className="h-5 w-7" fill="none" stroke="currentColor" strokeWidth="2.500" aria-hidden="true">
            <path d="M1 3L10 8L1 13M14 18H27" />
          </svg>
          <Dn className="h-2 w-3" />
        </button>
        <div className="flex flex-1 items-center bg-[#3c4453] pr-2 pl-2 text-[#97999d]">
          <input
            aria-label="Command"
            placeholder="Type a command"
            className="min-w-0 flex-1 bg-transparent text-[22px] italic outline-none placeholder:text-[#9b9ea5]"
          />
          <Dn className="h-2 w-3" />
        </div>
      </form>
    </div>
  );
}

const Anno = ({ c = G }: { c?: string }) => <path d="M14 0L20 17L28 31H24L16 23V20H12V23L4 31H0L8 17Z" fill={c} />;

const toggles: { name: string; on?: boolean; icon: React.ReactNode }[] = [
  { name: "Grid", on: true, icon: <S c={W} w={2.2} d="M8 0V32M16 0V32M24 0V32M0 8H32M0 16H32M0 24H32" /> },
  { name: "Snap", icon: <>{[6, 16, 26].flatMap((x) => [6, 16, 26].map((y) => <Sq key={`${x}-${y}`} x={x} y={y} c={G} />))}</> },
  { name: "Ortho", icon: <><S d="M1 0V31H32" /><S d="M1 20H11V31" /></> },
  { name: "Polar tracking", icon: <><circle cx="14" cy="17" r="12.500" stroke={G} strokeWidth="2" /><S d="M14 17H32M12 19L27 4" /></> },
  { name: "Dynamic input", on: true, icon: <><S c={W} w={2.2} d="M8 4V18M1 11H15" /><F c={W} d="M12 20H32V28H12ZM14 22V26H16V22Z" /></> },
  { name: "Lineweight", icon: <><S d="M0 4H32M16 12H32M16 22H32" /><S w={4} d="M0 12H17" /><S w={5} d="M0 22H17" /><F d="M0 26H15V30H0Z" /></> },
  { name: "Transparency", on: true, icon: <><rect x="2" y="2" width="28" height="28" rx="1" stroke={W} strokeWidth="2.400" />{[0, 1, 2, 3, 4, 5].flatMap((r) => [0, 1, 2].map((c) => <rect key={`${r}${c}`} x={7 + c * 6 + (r % 2) * 3} y={7 + r * 3} width="3" height="3" fill={W} />))}</> },
  { name: "Selection cycling", on: true, icon: <><S c={W} d="M7 2H3V28H7M18 2H22V12" /><rect x="9" y="6" width="7" height="7" stroke={W} strokeWidth="2" /><circle cx="13" cy="20" r="3.500" stroke={W} strokeWidth="2" /><F c={W} d="M18 14L31 26H26L28 31L25 32L22 27L18 30Z" /></> },
  { name: "Object snap tracking", on: true, icon: <><S c={W} d="M24 4L2 30H32" w={2.2} /><Sq x={14} y={15} c={W} s={6} /></> },
  { name: "UCS", on: true, icon: <><rect x="1" y="1" width="8" height="8" stroke={W} strokeWidth="2.200" /><S c={W} w={2.2} d="M14 5H31V31H4V14" /></> },
  { name: "Annotation visibility", on: true, icon: <><Anno c={W} /><circle cx="26" cy="8" r="6.500" fill={W} /></> },
  { name: "Autoscale", icon: <><Anno /><path d="M27 0L20 10H25L23 17L32 7H27L30 0Z" fill={Y} stroke={D} strokeWidth="1" /></> },
  { name: "Annotation scale", icon: <g transform="translate(2 0)"><Anno /></g> },
];

function StatusBar() {
  const tab = "flex items-center justify-center text-[22px] text-[#b4b6ba] bg-[#3c4453]";
  return (
    <footer className="my-0.5 ml-0.5 flex h-11 shrink-0 gap-0.5 font-['Noto_Sans']">
      <button className="flex w-29.5 items-center justify-center bg-[#4e5b70] pr-1 text-[22px] font-semibold text-[#f2f2f2]">Model</button>
      <button aria-label="Add layout" className={`${tab} w-11`}>
        <svg viewBox="0 0 24 24" className="size-6" stroke={G} strokeWidth="2" aria-hidden="true">
          <path d="M12 1V23M1 12H23" />
        </svg>
      </button>
      <button className={`${tab} w-29`}>Layout1</button>
      <button className={`${tab} w-29`}>Layout2</button>
      <div className="flex-1 bg-[#3c4453]" />
      <div className="mr-0.5 flex items-center gap-1 bg-[#3c4453] pr-3 pl-4">
        <output className="w-58 text-2xl whitespace-nowrap text-[#b4b6ba]">15.211, 7.275, 0.000</output>
        {toggles.map((t) => (
          <button key={t.name} aria-label={t.name} aria-pressed={!!t.on} className={`flex size-10 items-center justify-center ${t.on ? "bg-[#6b8fbf]" : ""}`}>
            <Svg>{t.icon}</Svg>
          </button>
        ))}
        <button className="flex items-center gap-2 text-2xl text-[#b4b6ba]">
          1:1
          <Dn className="h-2 w-3" />
        </button>
        <button aria-label="Isolate objects" className="ml-3">
          <Svg>
            <rect x="1" y="1" width="12" height="12" stroke={G} strokeWidth="2" />
            <circle cx="25" cy="13" r="6" stroke={G} strokeWidth="2" />
            <S d="M14 20L20 30H8Z" />
          </Svg>
        </button>
        <button aria-label="Customization" className="ml-2">
          <Gear className="size-7.5" c={G} />
        </button>
      </div>
    </footer>
  );
}

export default function App() {
  return (
    <div className="flex h-screen flex-col overflow-hidden bg-[#212830]">
      <Header />
      <div className="flex min-h-0 flex-1">
        <Palette />
        <div className="flex min-w-0 flex-1 flex-col">
          <nav className="mb-0.5 ml-0.5 flex h-11 shrink-0 gap-0.5">
            <button aria-label="Start" className="flex w-11.5 items-center justify-center bg-[#3c4453]">
              <Svg className="size-7">
                <F c={LB} d="M0 0H15V16H0Z" />
                <F d="M18 3H32V16H18ZM3 19H15V32H3ZM18 19H32V32H18Z" />
              </Svg>
            </button>
            <button aria-label="New drawing" className="flex w-11 items-center justify-center bg-[#3c4453]">
              <svg viewBox="0 0 24 24" className="size-6" stroke={G} strokeWidth="2" aria-hidden="true">
                <path d="M12 1V23M1 12H23" />
              </svg>
            </button>
            <button className="flex w-64 items-center bg-[#4e5b70] pl-1.5 font-['Liberation_Sans'] text-[21px] font-bold text-[#f2f2f2]">Drawing1*</button>
            <div className="flex-1 bg-[#3c4453]" />
            <button aria-label="Collapse panels" className="flex w-12 items-center justify-center bg-[#3c4453]">
              <svg viewBox="0 0 14 12" className="h-3 w-3.5" fill="none" stroke="#a0a0a0" strokeWidth="1.500" aria-hidden="true">
                <path d="M6 1L2 6L6 11M13 1L9 6L13 11" />
              </svg>
            </button>
          </nav>
          <div className="flex min-h-0 flex-1">
            <main className="relative ml-0.5 min-w-0 flex-1 overflow-hidden">
              <Scene />
              <div className="absolute top-2 left-6 flex h-8 items-center font-['Noto_Sans'] text-2xl text-[#999b9c]">
                <button className="mr-6" aria-label="Viewport">
                  <svg viewBox="0 0 16 16" className="size-4" stroke="currentColor" strokeWidth="2" aria-hidden="true">
                    <path d="M8 1V15M1 8H15" />
                  </svg>
                </button>
                <button className="h-6.5 border-l-2 border-[#999b9c] pr-4 pl-3 leading-6">Custom View</button>
                <button className="h-6.5 border-l-2 border-[#999b9c] pl-3 leading-6">2D Wireframe</button>
              </div>
              <div className="absolute top-22 right-9 flex flex-col items-center">
                <ViewCube />
                <button className="mt-9 flex h-6 w-25 items-center justify-between rounded-lg bg-[#66747c] px-2 font-['Liberation_Sans'] text-xl leading-6 text-[#202833]">
                  WCS
                  <svg viewBox="0 0 20 12" className="h-3 w-5" fill="#7d959c" stroke="#202833" strokeWidth="1.500" aria-hidden="true">
                    <path d="M2 1H18L10 10Z" />
                  </svg>
                </button>
              </div>
              <CommandLine />
            </main>
            <aside className="mb-0.5 ml-0.75 flex w-11.25 shrink-0 flex-col gap-0.5">
              {["Layers and Properties", "Reference Manager", "Blocks"].map((p) => (
                <button key={p} className="flex flex-1 items-center justify-center bg-[#30343f] pr-2 pb-1">
                  <span className="rotate-180 font-['Inter'] text-2xl text-[#d4d4d6] [writing-mode:vertical-rl]">{p}</span>
                </button>
              ))}
            </aside>
          </div>
          <StatusBar />
        </div>
      </div>
    </div>
  );
}
